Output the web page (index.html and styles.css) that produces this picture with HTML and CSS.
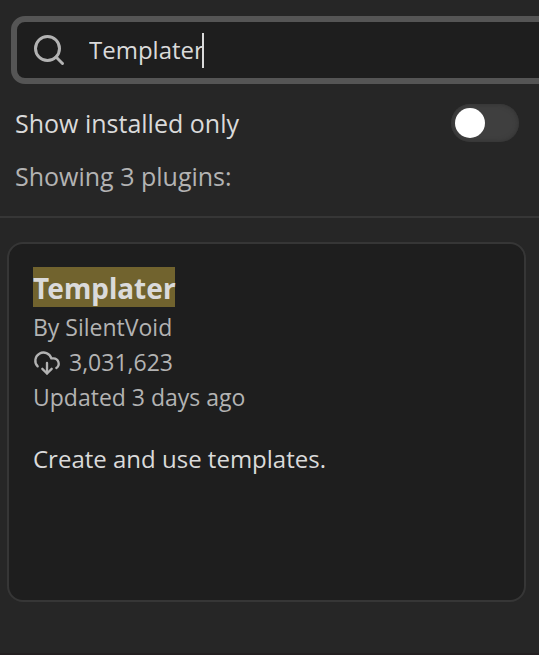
FILE: index.html
```html
<!DOCTYPE html>
<html lang="en">
<head>
<meta charset="utf-8">
<meta name="viewport" content="width=device-width, initial-scale=1">
<title>Community plugins</title>
<link rel="stylesheet" href="styles.css">
</head>
<body>
<header class="controls">
  <label class="search">
    <svg class="search-icon" viewBox="0 0 24 24" aria-hidden="true"><circle cx="11" cy="11" r="8"/><path d="m21 21-4.3-4.3"/></svg>
    <input class="search-input" type="text" value="Templater" aria-label="Search plugins" spellcheck="false">
    <span class="caret"></span>
  </label>
  <div class="setting">
    <label for="installed">Show installed only</label>
    <input class="toggle" id="installed" type="checkbox">
  </div>
  <p class="summary">Showing 3 plugins:</p>
</header>
<main class="results">
  <article class="card">
    <h2 class="name"><mark>Templater</mark></h2>
    <p class="meta">By SilentVoid</p>
    <p class="meta downloads">
      <svg class="cloud-icon" viewBox="0 0 24 24" aria-hidden="true"><path d="M4 14.899A7 7 0 1 1 15.71 8h1.79a4.5 4.5 0 0 1 2.5 8.242"/><path d="M12 12v9"/><path d="m8 17 4 4 4-4"/></svg>
      <span>3,031,623</span>
    </p>
    <p class="meta">Updated 3 days ago</p>
    <p class="description">Create and use templates.</p>
  </article>
</main>
</body>
</html>
```
FILE: styles.css
```css
* { box-sizing: border-box; }

body {
  margin: 0;
  min-height: 100vh;
  overflow-x: hidden;
  border-bottom: 2px solid #231f20;
  background: #262626;
  color: #dadada;
  font: 25px/36px "Open Sans", "Noto Sans", sans-serif;
}

p, h2 { margin: 0; }

svg {
  flex: none;
  fill: none;
  stroke: #b3b3b3;
  stroke-width: 2;
  stroke-linecap: round;
  stroke-linejoin: round;
}

.controls {
  padding: 16px 0 22px;
  border-bottom: 2px solid #363636;
}

/* The field runs past the right edge of the pane. */
.search {
  display: flex;
  align-items: center;
  height: 68px;
  margin: 0 -20px 0 11px;
  padding-left: 14px;
  border: 6px solid #555;
  border-radius: 14px;
  background: #1e1e1e;
  font-size: 24px;
}

.search-icon { width: 36px; height: 36px; }

.search-input {
  field-sizing: content;
  margin: 0 0 0 22px;
  padding: 0;
  border: 0;
  outline: 0;
  background: none;
  color: inherit;
  font: inherit;
}

.caret {
  width: 2px;
  height: 35px;
  margin-left: -2px;
  background: #dadada;
}

.setting {
  display: flex;
  align-items: center;
  justify-content: space-between;
  margin-top: 20px;
  padding: 0 20px 0 15px;
}

.toggle {
  appearance: none;
  display: flex;
  align-items: center;
  width: 68px;
  height: 38px;
  margin: 0;
  padding: 0 4px;
  border-radius: 19px;
  background: #3f3f3f;
  box-shadow: inset 0 0 5px #303030;
}

.toggle::before {
  content: "";
  width: 30px;
  height: 30px;
  border-radius: 50%;
  background: #fff;
}

.toggle:checked { justify-content: flex-end; }

.summary {
  margin-top: 16px;
  padding-left: 15px;
  color: #b3b3b3;
}

.results { padding: 24px 13px 24px 7px; }

.card {
  min-height: 360px;
  padding: 23px 24px;
  border: 2px solid #363636;
  border-radius: 16px;
  background: #1e1e1e;
}

.name {
  display: flex;
  height: 40px;
  margin-bottom: 3px;
  font-family: "Noto Sans", "Open Sans", sans-serif;
  font-size: 28px;
  line-height: 42px;
}

.name mark {
  background: #71632e;
  color: inherit;
}

.meta {
  color: #b3b3b3;
  font-size: 23px;
  line-height: 35px;
}

.downloads {
  display: flex;
  align-items: center;
  gap: 8px;
}

.cloud-icon { width: 28px; height: 28px; }

.description {
  margin-top: 26px;
  font-size: 24px;
}
```
